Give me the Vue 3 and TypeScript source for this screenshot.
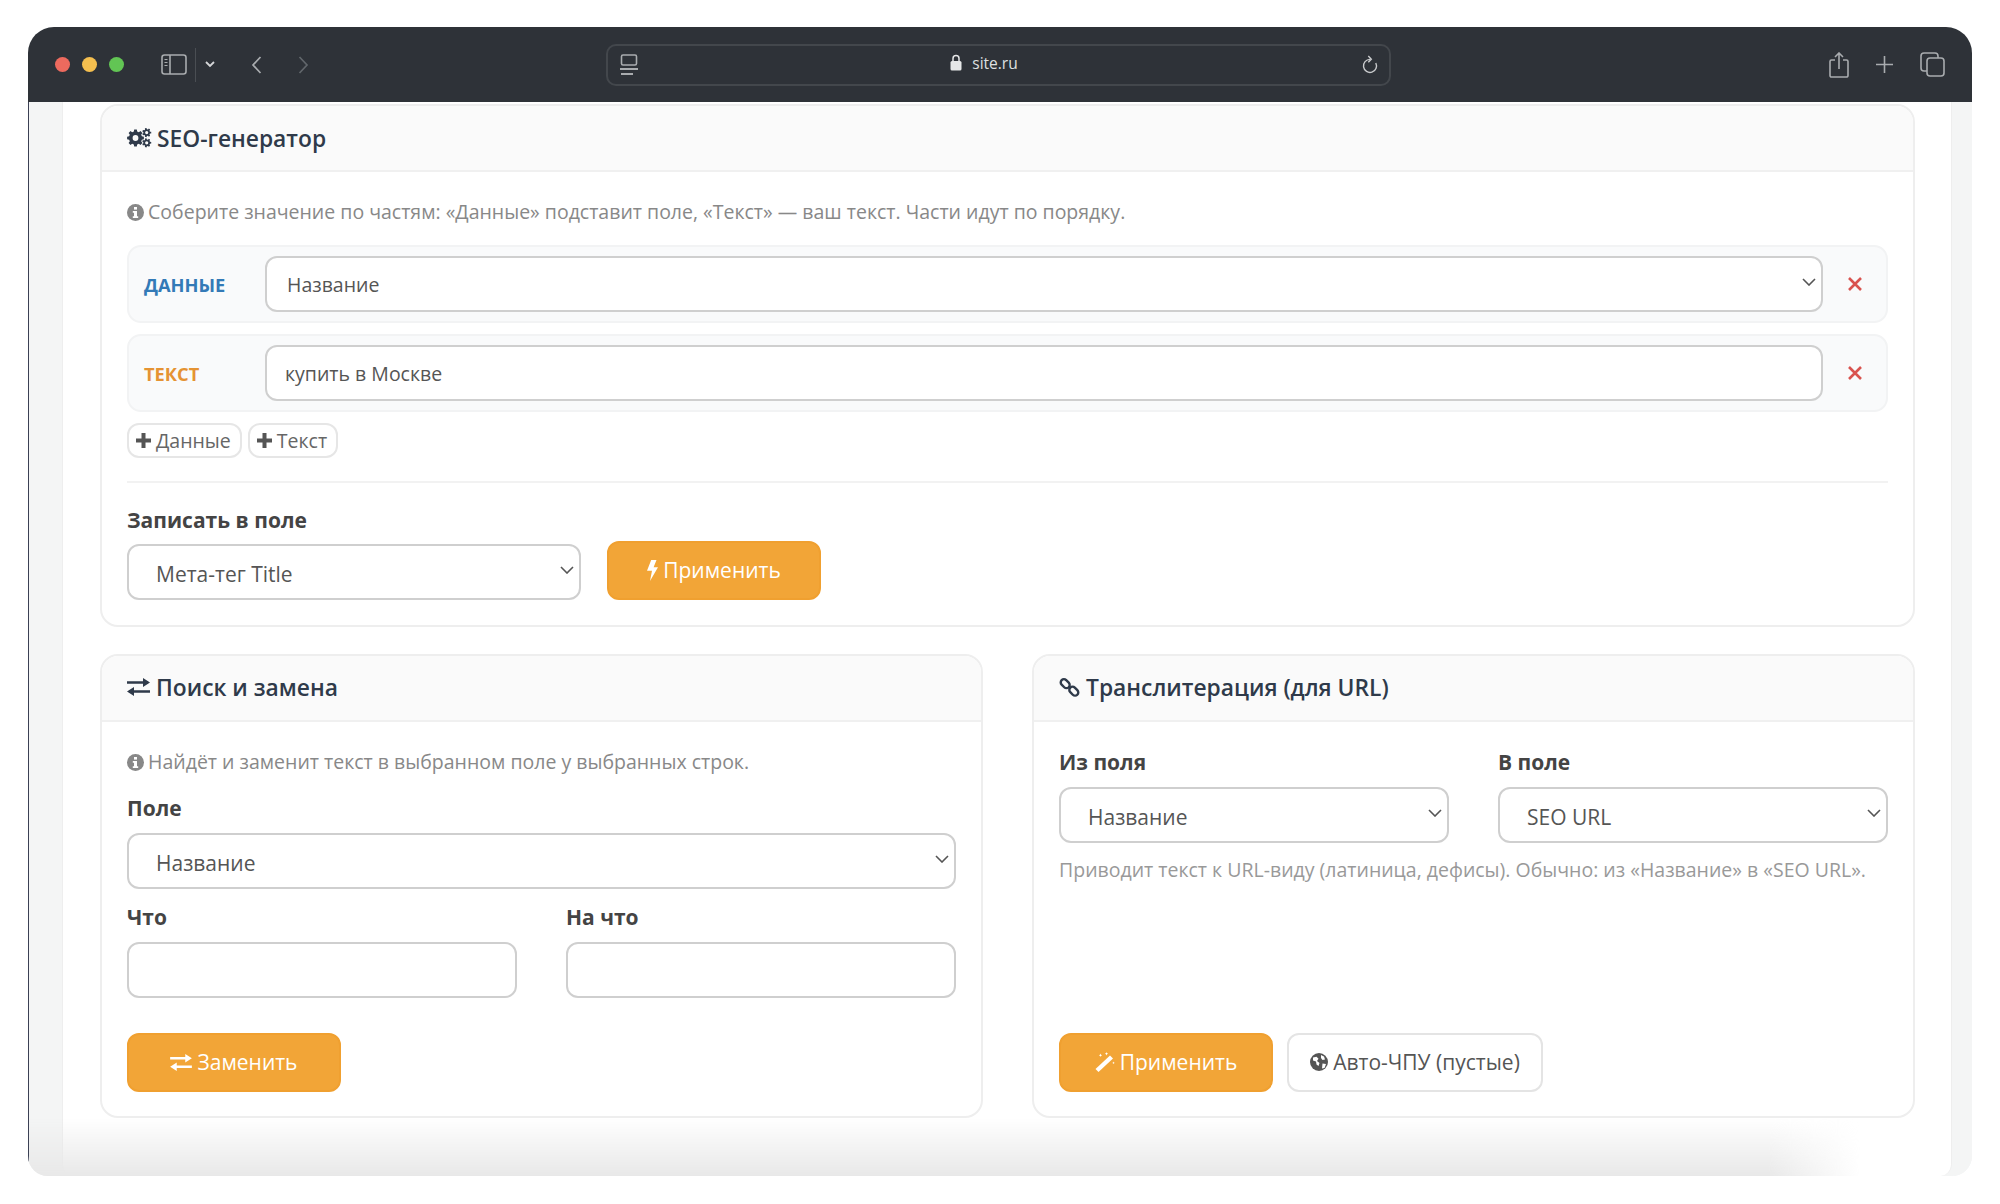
<script setup lang="ts">
// Outline of a toothed gear with a round hole, used for the SEO header icon
function gear(cx: number, cy: number, outer: number, inner: number, hole: number, teeth: number): string {
  const pts: string[] = []
  const step = (Math.PI * 2) / teeth
  for (let i = 0; i < teeth; i++) {
    const a = i * step
    const corners: [number, number][] = [
      [inner, a - step * 0.32],
      [outer, a - step * 0.2],
      [outer, a + step * 0.2],
      [inner, a + step * 0.32],
    ]
    for (const [r, t] of corners) {
      pts.push(`${(cx + r * Math.cos(t)).toFixed(2)} ${(cy + r * Math.sin(t)).toFixed(2)}`)
    }
  }
  const ring = `M${cx - hole} ${cy}a${hole} ${hole} 0 1 0 ${hole * 2} 0a${hole} ${hole} 0 1 0 ${-hole * 2} 0z`
  return `M${pts.join('L')}z${ring}`
}

const gears = [gear(8.5, 10, 8.5, 6.6, 2.9, 8), gear(19.7, 4.6, 4.6, 3.4, 1.6, 7), gear(19.7, 14.8, 4.6, 3.4, 1.6, 7)]
const exchange = 'M0 3.300h16V0l7 4.500-7 4.500V5.700H0zM23 12.300H7V9L0 13.500 7 18v-3.300h16z'
</script>

<template>
  <div class="shot">
    <div class="window">
      <header class="toolbar">
        <div class="lights">
          <i class="light red"></i>
          <i class="light yellow"></i>
          <i class="light green"></i>
        </div>
        <svg class="tb-sidebar" width="26" height="21" viewBox="0 0 26 21" fill="none" stroke="#a9acaf" stroke-width="1.600">
          <rect x="1" y="1" width="24" height="19" rx="2.500" />
          <path d="M9 1v19" />
          <path d="M3.500 5.500h3M3.500 8.500h3M3.500 11.500h3" stroke-width="1.200" />
        </svg>
        <span class="tb-sep"></span>
        <svg class="tb-chev" width="10" height="7" viewBox="0 0 10 7" fill="none" stroke="#d5d6d8" stroke-width="1.800">
          <path d="M1 1l4 4 4-4" />
        </svg>
        <svg class="tb-back" width="11" height="18" viewBox="0 0 11 18" fill="none" stroke="#a9acaf" stroke-width="1.700">
          <path d="M9.500 1L2 9l7.500 8" />
        </svg>
        <svg class="tb-fwd" width="11" height="18" viewBox="0 0 11 18" fill="none" stroke="#61666b" stroke-width="1.700">
          <path d="M1.500 1L9 9l-7.500 8" />
        </svg>
        <div class="address">
          <svg class="addr-icon" width="18" height="22" viewBox="0 0 18 22" fill="none" stroke="#a9acaf" stroke-width="1.600">
            <rect x="1.500" y="1" width="15" height="10" rx="1.500" />
            <path d="M0 15h18M1 20h12" stroke-width="2" />
          </svg>
          <span class="addr-center">
            <svg width="12" height="17" viewBox="0 0 12 17">
              <path d="M3 7V4.500a3 3 0 016 0V7" fill="none" stroke="#e6e7e8" stroke-width="1.500" />
              <rect x="0.500" y="7" width="11" height="9.500" rx="1.500" fill="#e6e7e8" />
            </svg>
            site.ru
          </span>
          <svg class="addr-reload" width="16" height="19" viewBox="0 0 16 19" fill="none" stroke="#c9cbcd" stroke-width="1.400">
            <path d="M13.800 8a6.500 6.500 0 11-5.800-3.600" />
            <path d="M6.300 1L9.300 4.200 6.300 7.200" />
          </svg>
        </div>
        <div class="tb-right">
          <svg width="20" height="26" viewBox="0 0 20 26" fill="none" stroke="#a9acaf" stroke-width="1.600">
            <path d="M6 8H2.500A1.500 1.500 0 001 9.500v14A1.500 1.500 0 002.500 25h15a1.500 1.500 0 001.500-1.500v-14A1.500 1.500 0 0017.500 8H14" />
            <path d="M10 17V1.500M6 5l4-4 4 4" />
          </svg>
          <svg width="19" height="19" viewBox="0 0 19 19" fill="none" stroke="#a9acaf" stroke-width="1.600">
            <path d="M9.500 1v17M1 9.500h17" />
          </svg>
          <svg width="25" height="25" viewBox="0 0 25 25" fill="none" stroke="#a9acaf" stroke-width="1.600">
            <rect x="1" y="1" width="17" height="18" rx="3" />
            <rect x="7" y="6" width="17" height="18" rx="3" fill="#2e3238" />
          </svg>
        </div>
      </header>

      <div class="body">
        <div class="gutter"></div>
        <main class="page">
          <section class="card top-card">
            <h3 class="card-head seo-head">
              <svg class="ico" width="25" height="20" viewBox="0 0 25 20" fill="#2f3a4a">
                <path v-for="g in gears" :key="g" :d="g" fill-rule="evenodd" />
              </svg>
              SEO-генератор
            </h3>
            <div class="card-body first-body">
              <p class="note">
                <svg class="ico info" width="17" height="17" viewBox="0 0 17 17">
                  <circle cx="8.500" cy="8.500" r="8.500" fill="#888" />
                  <rect x="7" y="3" width="3" height="2.600" fill="#fff" />
                  <path d="M5.800 7h4.200v5.200h1.200V14H5.800v-1.800H7V8.800H5.800z" fill="#fff" />
                </svg>
                Соберите значение по частям: «Данные» подставит поле, «Текст» — ваш текст. Части идут по порядку.
              </p>

              <div class="part">
                <span class="part-label data">ДАННЫЕ</span>
                <div class="select grow"><span>Название</span><svg class="caret" width="14" height="8" viewBox="0 0 14 8" fill="none" stroke="#555" stroke-width="1.600"><path d="M1 1l6 6 6-6" /></svg></div>
                <svg class="remove" width="14" height="14" viewBox="0 0 14 14" fill="none" stroke="#d9534f" stroke-width="2.600"><path d="M1 1l12 12M13 1L1 13" /></svg>
              </div>
              <div class="part">
                <span class="part-label text">ТЕКСТ</span>
                <div class="input grow flat">купить в Москве</div>
                <svg class="remove" width="14" height="14" viewBox="0 0 14 14" fill="none" stroke="#d9534f" stroke-width="2.600"><path d="M1 1l12 12M13 1L1 13" /></svg>
              </div>

              <div class="adders">
                <button class="chip"><svg width="15" height="15" viewBox="0 0 15 15" fill="#555"><path d="M5.500 0h4v5.500H15v4H9.500V15h-4V9.500H0v-4h5.500z" /></svg>Данные</button>
                <button class="chip"><svg width="15" height="15" viewBox="0 0 15 15" fill="#555"><path d="M5.500 0h4v5.500H15v4H9.500V15h-4V9.500H0v-4h5.500z" /></svg>Текст</button>
              </div>

              <hr class="rule" />

              <label class="field-label">Записать в поле</label>
              <div class="apply-row">
                <div class="select meta"><span>Мета-тег Title</span><svg class="caret" width="14" height="8" viewBox="0 0 14 8" fill="none" stroke="#555" stroke-width="1.600"><path d="M1 1l6 6 6-6" /></svg></div>
                <button class="btn orange apply">
                  <svg width="11" height="21" viewBox="0 0 11 21" fill="#fff"><path d="M4.200 0h5.300L6.600 7.200H11L3 21l2-10.200H0z" /></svg>
                  Применить
                </button>
              </div>
            </div>
          </section>

          <div class="columns">
            <section class="card">
              <h3 class="card-head col-head">
                <svg class="ico" width="23" height="18" viewBox="0 0 23 18" fill="#2f3a4a"><path :d="exchange" /></svg>
                Поиск и замена
              </h3>
              <div class="card-body col-body">
                <p class="note">
                  <svg class="ico info" width="17" height="17" viewBox="0 0 17 17">
                    <circle cx="8.500" cy="8.500" r="8.500" fill="#888" />
                    <rect x="7" y="3" width="3" height="2.600" fill="#fff" />
                    <path d="M5.800 7h4.200v5.200h1.200V14H5.800v-1.800H7V8.800H5.800z" fill="#fff" />
                  </svg>
                  Найдёт и заменит текст в выбранном поле у выбранных строк.
                </p>
                <label class="field-label compact">Поле</label>
                <div class="select"><span>Название</span><svg class="caret" width="14" height="8" viewBox="0 0 14 8" fill="none" stroke="#555" stroke-width="1.600"><path d="M1 1l6 6 6-6" /></svg></div>
                <div class="pair pair-gap">
                  <div>
                    <label class="field-label compact">Что</label>
                    <div class="input"></div>
                  </div>
                  <div>
                    <label class="field-label compact">На что</label>
                    <div class="input"></div>
                  </div>
                </div>
                <div class="actions">
                  <button class="btn orange replace">
                    <svg width="22" height="17" viewBox="0 0 23 18" fill="#fff"><path :d="exchange" /></svg>
                    Заменить
                  </button>
                </div>
              </div>
            </section>

            <section class="card">
              <h3 class="card-head col-head">
                <svg class="ico" width="21" height="21" viewBox="0 0 21 21" fill="none" stroke="#2f3a4a" stroke-width="2.400"><rect x="1.200" y="3.500" width="10" height="6.400" rx="3.200" transform="rotate(45 6.200 6.700)" /><rect x="9.800" y="11" width="10" height="6.400" rx="3.200" transform="rotate(45 14.800 14.200)" /></svg>
                Транслитерация (для URL)
              </h3>
              <div class="card-body col-body">
                <div class="pair">
                  <div>
                    <label class="field-label compact">Из поля</label>
                    <div class="select"><span>Название</span><svg class="caret" width="14" height="8" viewBox="0 0 14 8" fill="none" stroke="#555" stroke-width="1.600"><path d="M1 1l6 6 6-6" /></svg></div>
                  </div>
                  <div>
                    <label class="field-label compact">В поле</label>
                    <div class="select"><span>SEO URL</span><svg class="caret" width="14" height="8" viewBox="0 0 14 8" fill="none" stroke="#555" stroke-width="1.600"><path d="M1 1l6 6 6-6" /></svg></div>
                  </div>
                </div>
                <p class="help">Приводит текст к URL-виду (латиница, дефисы). Обычно: из «Название» в «SEO URL».</p>
                <div class="actions">
                  <button class="btn orange apply">
                    <svg width="20" height="20" viewBox="0 0 20 20" fill="#fff"><path d="M15 3.500l3 3L3.500 20l-3-3z" /><path d="M11.500 0l.5 1.300 1.300.5-1.300.5-.5 1.300-.5-1.300-1.300-.5 1.300-.5zM5.500 1.500l.5 1.300 1.300.5-1.300.5-.5 1.300-.5-1.300-1.300-.5 1.300-.5zM18.500 9.500l.4 1 1 .4-1 .4-.4 1-.4-1-1-.4 1-.4z" /></svg>
                    Применить
                  </button>
                  <button class="btn plain">
                    <svg width="18" height="18" viewBox="0 0 18 18"><circle cx="9" cy="9" r="9" fill="#555" /><path d="M3 4.500l3.500-.8 2 2-1.500 2.300 2.500 2-1 3-2-1.500-.5-3L3 7.500zM11 2l3 1.500 1 3-2.500.5L11 5zM12.500 10.500l3.500.5-1.500 4-2.500.5z" fill="#fff" /></svg>
                    Авто-ЧПУ (пустые)
                  </button>
                </div>
              </div>
            </section>
          </div>
        </main>
        <div class="gutter right"></div>
        <div class="fade"></div>
      </div>
    </div>
  </div>
</template>

<style>
html,
body {
  margin: 0;
  background: #fff;
}
</style>

<style scoped>
.shot {
  width: 2000px;
  height: 1204px;
  padding: 27px 28px 28px;
  box-sizing: border-box;
  font-family: "Open Sans", "Noto Sans", sans-serif;
  color: #444;
}

.window {
  height: 100%;
  display: flex;
  flex-direction: column;
  border-radius: 26px 26px 20px 20px;
  overflow: hidden;
}

.toolbar {
  height: 75px;
  flex: none;
  background: #2e3238;
  display: flex;
  align-items: center;
  padding-left: 27px;
  box-sizing: border-box;
}

.lights {
  display: flex;
  gap: 12px;
  margin-right: 37px;
}

.light {
  width: 15px;
  height: 15px;
  border-radius: 50%;
}

.light.red { background: #ed6a5e; }
.light.yellow { background: #f5bf4f; }
.light.green { background: #62c554; }

.tb-sep {
  width: 1px;
  height: 34px;
  background: #4a4e53;
  margin: 0 9px 0 8px;
}

.tb-chev { margin-right: 36px; }
.tb-back { margin-right: 36px; }
.tb-fwd { margin-right: 297px; }

.address {
  width: 785px;
  height: 42px;
  border: 2px solid #43474c;
  border-radius: 10px;
  display: flex;
  align-items: center;
  justify-content: space-between;
  padding: 0 11px 0 12px;
  box-sizing: border-box;
  color: #dfe0e1;
  font-size: 15.500px;
}

.addr-center {
  display: flex;
  align-items: center;
  gap: 10px;
  margin-right: 32px;
  margin-bottom: 4px;
}

.tb-right {
  margin-left: auto;
  margin-right: 27px;
  display: flex;
  align-items: center;
  gap: 26px;
}

.body {
  flex: 1;
  display: flex;
  position: relative;
  min-height: 0;
  background: #f4f5f5;
}

.gutter {
  width: 34px;
  flex: none;
  box-sizing: border-box;
  border-left: 1px solid #3b4054;
  background: #f4f5f5;
}

.gutter.right {
  width: 20px;
  border-left: 0;
}

.page {
  flex: 1;
  min-width: 0;
  padding: 2px 36px 0 37px;
  background: #fff;
  border-right: 1px solid #eee;
  border-left: 1px solid #eee;
  border-radius: 0 0 12px 12px;
}

.fade {
  position: absolute;
  left: 1px;
  right: 112px;
  bottom: 0;
  height: 58px;
  background: linear-gradient(to bottom, rgba(232, 232, 232, 0), #e8e8e8);
  -webkit-mask-image: linear-gradient(to right, #000 95%, transparent);
  mask-image: linear-gradient(to right, #000 95%, transparent);
  pointer-events: none;
}

.card {
  background: #fff;
  border: 2px solid #eeeeee;
  border-radius: 18px;
  box-sizing: border-box;
  overflow: hidden;
  display: flex;
  flex-direction: column;
}

.top-card { height: 523px; }

.card-head {
  margin: 0;
  height: 66px;
  flex: none;
  box-sizing: border-box;
  padding: 0 25px;
  display: flex;
  align-items: center;
  gap: 6px;
  background: #fafafa;
  border-bottom: 2px solid #f0f0f0;
  font-size: 22.800px;
  font-weight: 600;
  color: #2f3a4a;
}

.seo-head { gap: 5px; }
.col-head { padding-bottom: 2px; }

.card-body {
  padding: 25px 25px 0;
  flex: 1;
}

.first-body { padding-top: 26px; }

.ico { flex: none; }

.note {
  margin: 0 0 19px;
  font-size: 19.500px;
  line-height: 28px;
  color: #888;
}

.note .info {
  vertical-align: -2px;
  margin-right: -1px;
}

.part {
  height: 78px;
  box-sizing: border-box;
  background: #f9fafb;
  border: 2px solid #f2f3f4;
  border-radius: 14px;
  display: flex;
  align-items: center;
  padding: 0 24px 0 15px;
  margin-bottom: 11px;
}

.part-label {
  width: 121px;
  flex: none;
  font-size: 18.300px;
  font-weight: 700;
}

.part-label.data { color: #337ab7; }
.part-label.text { color: #e59333; }

.grow {
  flex: 1;
  min-width: 0;
}

.remove {
  margin-left: 25px;
  flex: none;
}

.select,
.input {
  height: 56px;
  box-sizing: border-box;
  background: #fff;
  border: 2px solid #cfcfcf;
  border-radius: 12px;
  font-size: 21px;
  color: #555;
  display: flex;
  align-items: center;
  position: relative;
  padding: 3px 15px 0 27px;
}

.part .select,
.part .input {
  font-size: 19.500px;
  padding-top: 0;
}

.part .select { padding-left: 20px; }
.input.flat { padding-left: 18px; }

.select .caret {
  position: absolute;
  right: 5px;
  top: 20px;
}

.adders {
  display: flex;
  gap: 6px;
}

.chip {
  height: 35px;
  box-sizing: border-box;
  background: #fff;
  border: 2px solid #e6e6e6;
  border-radius: 12px;
  padding: 0 9px 0 7px;
  display: flex;
  align-items: center;
  gap: 5px;
  font: inherit;
  font-size: 19.500px;
  color: #666;
}

.rule {
  border: 0;
  height: 2px;
  background: #f2f2f2;
  margin: 23px 0;
}

.field-label {
  display: block;
  font-size: 21px;
  font-weight: 700;
  line-height: 28px;
  color: #444;
  margin-bottom: 7px;
}

.field-label.compact {
  margin-bottom: 11px;
}

.apply-row {
  display: flex;
  gap: 26px;
  align-items: flex-end;
}

.select.meta { width: 454px; }

.btn {
  height: 59px;
  box-sizing: border-box;
  border-radius: 12px;
  border: 2px solid transparent;
  padding-bottom: 2px;
  font: inherit;
  font-size: 21px;
  display: flex;
  align-items: center;
  justify-content: center;
  gap: 5px;
}

.btn.orange {
  background: #f2a537;
  border-color: #f0a030;
  color: #fff;
}

.btn.apply { width: 214px; }
.btn.replace { width: 214px; }

.btn.plain {
  width: 256px;
  background: #fff;
  border-color: #e4e4e4;
  color: #555;
}

.columns {
  display: grid;
  grid-template-columns: 883px 883px;
  justify-content: space-between;
  margin-top: 27px;
}

.columns .card { height: 464px; }

.col-body {
  display: flex;
  flex-direction: column;
  padding-top: 26px;
  padding-bottom: 24px;
}

.col-body .note { margin-bottom: 18px; }

.pair {
  display: grid;
  grid-template-columns: 1fr 1fr;
  gap: 49px;
}

.pair-gap { margin-top: 14px; }

.help {
  margin: 13px 0 0;
  font-size: 19.500px;
  line-height: 28px;
  color: #999;
  white-space: nowrap;
}

.actions {
  margin-top: auto;
  display: flex;
  gap: 14px;
}
</style>
